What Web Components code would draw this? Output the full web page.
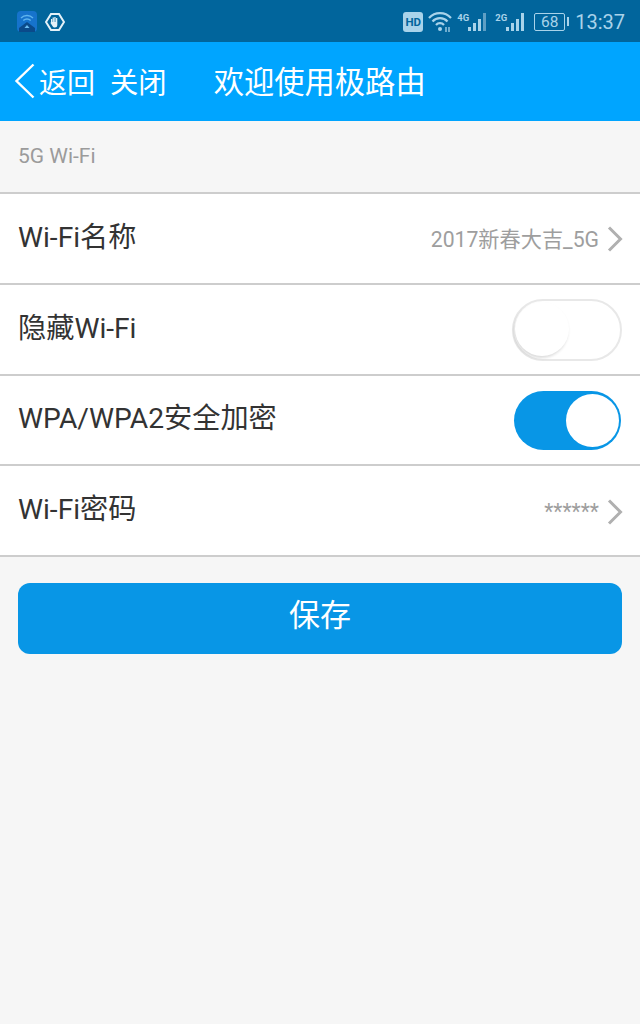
<!DOCTYPE html>
<html lang="zh">
<head>
<meta charset="utf-8">
<title>5G Wi-Fi</title>
<style>
  html, body { margin: 0; padding: 0; }
  body {
    width: 640px; height: 1024px; overflow: hidden;
    background: #f6f6f6;
    font-family: Roboto, "Noto Sans CJK SC", sans-serif;
  }
</style>
</head>
<body>
<status-bar></status-bar>
<app-header title="欢迎使用极路由"></app-header>
<section-label>5G Wi-Fi</section-label>
<settings-list>
  <setting-row label="Wi-Fi名称" value="2017新春大吉_5G" arrow></setting-row>
  <setting-row label="隐藏Wi-Fi"><toggle-switch></toggle-switch></setting-row>
  <setting-row label="WPA/WPA2安全加密"><toggle-switch checked></toggle-switch></setting-row>
  <setting-row label="Wi-Fi密码" value="******" arrow></setting-row>
</settings-list>
<save-button>保存</save-button>

<script>
class StatusBar extends HTMLElement {
  constructor() {
    super();
    this.attachShadow({ mode: 'open' });
    this.shadowRoot.innerHTML = `
      <style>
        :host { display: flex; align-items: center; justify-content: space-between; box-sizing: border-box; height: 42px; padding: 1px 15px 0 17px; background: #01659c; color: #a9d3ea; font-family: Roboto, sans-serif; }
        .side { display: flex; align-items: center; }
        .left { gap: 8px; }
        svg { display: block; }
        .hd { width: 20px; height: 20px; border-radius: 3px; background: #a9d3ea; color: #01659c; font: 700 11.5px/20px Roboto, sans-serif; text-align: center; margin-right: 5px; }
        .wifi { margin-right: 5px; }
        .net { display: flex; align-items: flex-start; gap: 1px; height: 18px; margin-right: 9px; }
        .net.last { margin-right: 10px; }
        .net span { width: 10px; font: 700 9.5px/9px Roboto, sans-serif; }
        .battery { display: flex; align-items: center; gap: 2px; margin-right: 6px; }
        .battery b { display: block; box-sizing: border-box; width: 31px; height: 18px; border: 1px solid #a9d3ea; border-radius: 2px; font: 400 15.5px/16px Roboto, sans-serif; text-align: center; }
        .battery i { display: block; width: 2px; height: 9px; background: #a9d3ea; }
        .time { font-size: 20px; line-height: 24px; }
      </style>
      <div class="side left">
        <svg width="20" height="21" viewBox="0 0 20 21">
          <rect width="20" height="21" rx="4" fill="#1673cc"/>
          <path d="M2 17 10 11l8 6v4H2z" fill="#0a4a8a"/>
          <path d="M4 7a8.500 8.500 0 0 1 12 0M6.300 9.500a5.200 5.200 0 0 1 7.400 0" fill="none" stroke="#5fb4ee" stroke-width="1.400"/>
          <path d="M7.500 17 10 14l2.500 3z" fill="#6bbcf0"/>
        </svg>
        <svg width="20" height="20" viewBox="0 0 20 20">
          <path d="M6 2h8l5 8-5 8H6l-5-8z" fill="none" stroke="#e4f1f8" stroke-width="2"/>
          <path d="M6 10V7h1.200v3h.4V5.500h1.300V10h.4V5h1.300v5h.4V6h1.300v7a2.500 2.500 0 0 1-2.500 2.500H9.500a2 2 0 0 1-1.700-1L5.500 11z" fill="#e4f1f8"/>
        </svg>
      </div>
      <div class="side right">
        <div class="hd">HD</div>
        <svg class="wifi" width="24" height="22" viewBox="0 0 24 22">
          <path d="M1 7a15 15 0 0 1 22 0M4.500 10.500a10 10 0 0 1 15 0M8 14a5.200 5.200 0 0 1 8 0" fill="none" stroke="#a9d3ea" stroke-width="2.200"/>
          <circle cx="12" cy="18" r="2" fill="#a9d3ea"/>
          <path d="M18 21v-5M21 16v5" stroke="#a9d3ea" stroke-width="1.300"/>
        </svg>
        <div class="net"><span>4G</span>
          <svg width="18" height="18" viewBox="0 0 18 18">
            <path d="M0 14h3v4H0zM5 10h3v8H5zM10 6h3v12h-3z" fill="#a9d3ea"/>
            <path d="M15 0h3v18h-3z" fill="#5f9fc4"/>
          </svg>
        </div>
        <div class="net last"><span>2G</span>
          <svg width="18" height="18" viewBox="0 0 18 18">
            <path d="M0 14h3v4H0zM5 10h3v8H5zM10 6h3v12h-3zM15 0h3v18h-3z" fill="#a9d3ea"/>
          </svg>
        </div>
        <div class="battery"><b>68</b><i></i></div>
        <div class="time">13:37</div>
      </div>
    `;
  }
}
customElements.define('status-bar', StatusBar);

class AppHeader extends HTMLElement {
  constructor() {
    super();
    this.attachShadow({ mode: 'open' });
  }

  connectedCallback() {
    const title = this.getAttribute('title') || '';
    this.removeAttribute('title');
    this.shadowRoot.innerHTML = `
      <style>
        :host { display: flex; align-items: center; height: 79px; padding: 0 0 2px 14px; box-sizing: border-box; background: #00a5ff; color: #fff; font: 28px/34px "Noto Sans CJK SC", sans-serif; }
        svg { display: block; margin-right: 3px; }
        .close { margin-left: 15px; font-size: 28.300px; }
        .title { margin-left: 47px; font-size: 30.300px; position: relative; top: -1px; }
      </style>
      <svg width="22" height="36" viewBox="0 0 22 36"><path d="M19.500 1.500 2.500 18l17 16.500" fill="none" stroke="#fff" stroke-width="2.400"/></svg>
      <span>返回</span>
      <span class="close">关闭</span>
      <span class="title">${title}</span>
    `;
  }
}
customElements.define('app-header', AppHeader);

class SectionLabel extends HTMLElement {
  constructor() {
    super();
    this.attachShadow({ mode: 'open' });
    this.shadowRoot.innerHTML = `
      <style>
        :host { display: flex; align-items: center; box-sizing: border-box; height: 71px; padding: 0 0 2px 18px; color: #9b9b9b; font: 21px Roboto, sans-serif; }
      </style>
      <slot></slot>
    `;
  }
}
customElements.define('section-label', SectionLabel);

class SettingsList extends HTMLElement {
  constructor() {
    super();
    this.attachShadow({ mode: 'open' });
    this.shadowRoot.innerHTML = `
      <style>
        :host { display: block; background: #fff; border-top: 2px solid #cdcdcd; }
      </style>
      <slot></slot>
    `;
  }
}
customElements.define('settings-list', SettingsList);

class SettingRow extends HTMLElement {
  constructor() {
    super();
    this.attachShadow({ mode: 'open' });
  }

  connectedCallback() {
    const label = this.getAttribute('label') || '';
    const value = this.getAttribute('value');
    const arrow = this.hasAttribute('arrow')
      ? `<svg width="16" height="26" viewBox="0 0 16 26"><path d="M2 1.500 13.500 13 2 24.500" fill="none" stroke="#b0b0b0" stroke-width="3"/></svg>`
      : '';
    this.shadowRoot.innerHTML = `
      <style>
        :host { display: flex; align-items: center; justify-content: space-between; box-sizing: border-box; height: 90.75px; padding: 0 18px 1px 18px; border-bottom: 2px solid #cdcdcd; }
        .label { color: #333; font: 28.2px/34px Roboto, "Noto Sans CJK SC", sans-serif; }
        .right { display: flex; align-items: center; gap: 8px; }
        .value { color: #9e9e9e; font: 21.200px/28px Roboto, "Noto Sans CJK SC", sans-serif; margin-top: 4px; }
        svg { display: block; margin-right: -1px; margin-top: 3px; }
      </style>
      <span class="label">${label}</span>
      <div class="right">
        ${value ? `<span class="value">${value}</span>` : ''}
        ${arrow}
        <slot></slot>
      </div>
    `;
  }
}
customElements.define('setting-row', SettingRow);

class ToggleSwitch extends HTMLElement {
  constructor() {
    super();
    this.attachShadow({ mode: 'open' });
    this.shadowRoot.innerHTML = `
      <style>
        :host { display: block; position: relative; box-sizing: border-box; width: 110px; height: 62px; border-radius: 31px; background: #fff; border: 2px solid #e8e8e8; margin-top: 3px; }
        .knob { position: absolute; left: 1px; top: 1px; width: 54px; height: 54px; border-radius: 50%; background: #fff; box-shadow: -1px 2px 3px rgba(0,0,0,.14); }
        :host([checked]) { width: 107px; height: 59px; margin-right: 1px; border: 0; background: #0896e6; border-radius: 30px; }
        :host([checked]) .knob { left: auto; right: 2px; top: 3px; width: 53px; height: 53px; box-shadow: none; }
      </style>
      <div class="knob"></div>
    `;
  }
}
customElements.define('toggle-switch', ToggleSwitch);

class SaveButton extends HTMLElement {
  constructor() {
    super();
    this.attachShadow({ mode: 'open' });
    this.shadowRoot.innerHTML = `
      <style>
        :host { display: flex; align-items: center; justify-content: center; box-sizing: border-box; height: 71px; margin: 26px 18px 0; padding-bottom: 13px; border-radius: 12px; background: #0896e6; color: #fff; font: 31px "Noto Sans CJK SC", sans-serif; }
      </style>
      <slot></slot>
    `;
  }
}
customElements.define('save-button', SaveButton);
</script>
</body>
</html>
